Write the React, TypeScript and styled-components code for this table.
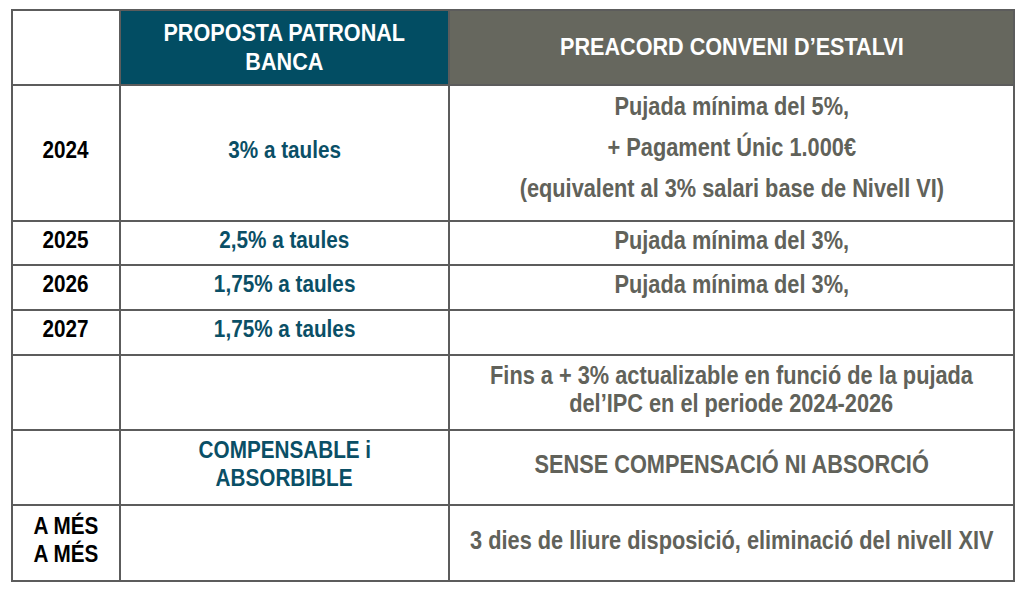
import { createGlobalStyle, styled } from 'styled-components';

type Tone = 'year' | 'bank' | 'deal';
type HeadTone = 'blank' | 'bank' | 'deal';

interface Row {
  height: number;
  year?: string[];
  bank?: string[];
  deal?: string[];
  dealSpaced?: boolean;
}

const GlobalStyle = createGlobalStyle`
  html, body {
    margin: 0;
    background: #ffffff;
  }
  body {
    font-family: 'Liberation Sans', Arial, Helvetica, sans-serif;
  }
`;

const Page = styled.div`
  padding: 9px 0 0 11px;
`;

const Table = styled.table`
  width: 1002px;
  border-collapse: collapse;
  table-layout: fixed;
`;

const HeadCell = styled.th<{ $tone: HeadTone }>`
  height: 71px;
  padding: 0 8px 2px;
  border: 2px solid #5c5c5c;
  background: ${({ $tone }) =>
    $tone === 'bank' ? '#024d63' : $tone === 'deal' ? '#66675e' : '#ffffff'};
  color: #ffffff;
  font-size: 24px;
  line-height: 29px;
  font-weight: 700;
  text-align: center;
  vertical-align: middle;
`;

const Cell = styled.td<{ $tone: Tone; $spaced?: boolean }>`
  padding: 0 8px ${({ $spaced }) => ($spaced ? '11px' : '7px')};
  border: 2px solid #5c5c5c;
  color: ${({ $tone }) =>
    $tone === 'bank' ? '#0a4f66' : $tone === 'deal' ? '#61625a' : '#000000'};
  font-size: ${({ $tone }) => ($tone === 'deal' ? '25px' : '23px')};
  line-height: 28px;
  font-weight: 700;
  text-align: center;
  vertical-align: middle;
`;

/* the source font is a narrow grotesque: squeeze Liberation Sans to its width */
const Line = styled.div<{ $spaced?: boolean; $squeeze: number }>`
  display: flex;
  justify-content: center;
  line-height: ${({ $spaced }) => ($spaced ? '41px' : 'inherit')};
  white-space: nowrap;

  & > span {
    display: inline-block;
    transform: scaleX(${({ $squeeze }) => $squeeze});
  }
`;

const rows: Row[] = [
  {
    height: 134,
    year: ['2024'],
    bank: ['3% a taules'],
    deal: [
      'Pujada mínima del 5%,',
      '+ Pagament Únic 1.000€',
      '(equivalent al 3% salari base de Nivell VI)',
    ],
    dealSpaced: true,
  },
  { height: 44, year: ['2025'], bank: ['2,5% a taules'], deal: ['Pujada mínima del 3%,'] },
  { height: 45, year: ['2026'], bank: ['1,75% a taules'], deal: ['Pujada mínima del 3%,'] },
  { height: 45, year: ['2027'], bank: ['1,75% a taules'] },
  {
    height: 75,
    deal: ['Fins a + 3% actualizable en funció de la pujada', 'del’IPC en el periode 2024-2026'],
  },
  {
    height: 75,
    bank: ['COMPENSABLE i', 'ABSORBIBLE'],
    deal: ['SENSE COMPENSACIÓ NI ABSORCIÓ'],
  },
  {
    height: 76,
    year: ['A MÉS', 'A MÉS'],
    deal: ['3 dies de lliure disposició, eliminació del nivell XIV'],
  },
];

function Lines({
  items = [],
  spaced,
  squeeze = 0.9,
}: {
  items?: string[];
  spaced?: boolean;
  squeeze?: number;
}) {
  return (
    <>
      {items.map((text, i) => (
        <Line key={i} $spaced={spaced} $squeeze={squeeze}>
          <span>{text}</span>
        </Line>
      ))}
    </>
  );
}

export default function App() {
  return (
    <>
      <GlobalStyle />
      <Page>
        <Table>
          <colgroup>
            <col style={{ width: 108 }} />
            <col style={{ width: 329 }} />
            <col style={{ width: 565 }} />
          </colgroup>
          <thead>
            <tr>
              <HeadCell $tone="blank" />
              <HeadCell $tone="bank">
                <Lines items={['PROPOSTA PATRONAL', 'BANCA']} />
              </HeadCell>
              <HeadCell $tone="deal">
                <Lines items={['PREACORD CONVENI D’ESTALVI']} />
              </HeadCell>
            </tr>
          </thead>
          <tbody>
            {rows.map((row, i) => (
              <tr key={i} style={{ height: row.height }}>
                <Cell $tone="year">
                  <Lines items={row.year} />
                </Cell>
                <Cell $tone="bank">
                  <Lines items={row.bank} />
                </Cell>
                <Cell $tone="deal" $spaced={row.dealSpaced}>
                  <Lines items={row.deal} spaced={row.dealSpaced} squeeze={0.87} />
                </Cell>
              </tr>
            ))}
          </tbody>
        </Table>
      </Page>
    </>
  );
}
